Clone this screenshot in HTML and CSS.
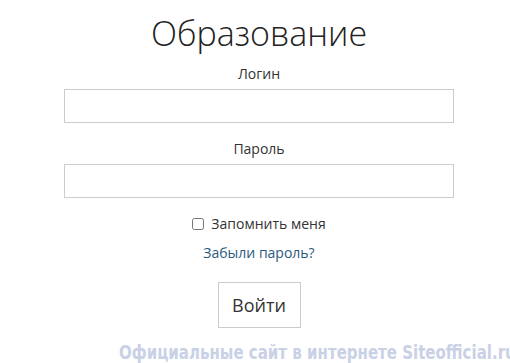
FILE: index.html
```html
<!DOCTYPE html>
<html>
	<head>
		<meta charset="utf-8">
		<title>Образование</title>
		<link rel="stylesheet" href="styles.css">
	</head>
	<body>
		<div id="LoginBox">
			<h1 class="Title">Образование</h1>
			<form name="loginForm" class="LoginForm">
				<label class="FieldLabel" for="loginID">Логин</label>
				<input type="text" id="loginID" class="FieldInput">
				<label class="FieldLabel Second" for="passwordID">Пароль</label>
				<input type="password" id="passwordID" class="FieldInput">
				<label class="Remember"><input type="checkbox" class="RememberBox"> Запомнить меня</label>
				<a class="Forgot" href="#">Забыли пароль?</a>
				<button type="button" class="LoginButton">Войти</button>
			</form>
		</div>
		<div class="Watermark">Официальные сайт в интернете Siteofficial.ru</div>
	</body>
</html>
```

FILE: styles.css
```css
body {
	margin: 0;
	background-color: #ffffff;
	font-family: "Open Sans", "Liberation Sans", sans-serif;
	color: #333333;
	overflow: hidden;
	}

#LoginBox{
	width: 390px;
	margin-left: 64px;
	text-align: center;
	}

.Title{
	margin: 10px 0 0 0;
	font-weight: 300;
	font-size: 34px;
	line-height: 46px;
	color: #222222;
	}

.LoginForm{
	display: flex;
	flex-direction: column;
	align-items: center;
	}

.FieldLabel{
	font-size: 14px;
	line-height: 20px;
	margin-top: 8px;
	margin-bottom: 5px;
	}

.FieldLabel.Second{
	margin-top: 16px;
	}

.FieldInput{
	box-sizing: border-box;
	width: 390px;
	height: 34px;
	margin: 0;
	border: 1px solid #cccccc;
	background: #ffffff;
	}

.Remember{
	display: flex;
	align-items: center;
	font-size: 14px;
	line-height: 20px;
	margin-top: 16px;
	}

.RememberBox{
	width: 12px;
	height: 12px;
	margin: 0 7px 0 0;
	}

.Forgot{
	font-size: 14px;
	line-height: 20px;
	margin-top: 9px;
	color: #2a5b7e;
	text-decoration: none;
	}

.LoginButton{
	margin-top: 19px;
	width: 83px;
	height: 46px;
	font-family: "Open Sans", "Liberation Sans", sans-serif;
	font-size: 18px;
	color: #333333;
	background-color: #ffffff;
	border: 1px solid #cccccc;
	border-radius: 0;
	cursor: pointer;
	}

.Watermark{
	margin-top: 13px;
	width: max-content;
	font-family: "DejaVu Sans", sans-serif;
	font-weight: bold;
	font-size: 19.5px;
	line-height: 24px;
	color: #c9d1e6;
	white-space: nowrap;
	transform: translateX(119px) scaleX(0.77);
	transform-origin: left center;
	}
```
